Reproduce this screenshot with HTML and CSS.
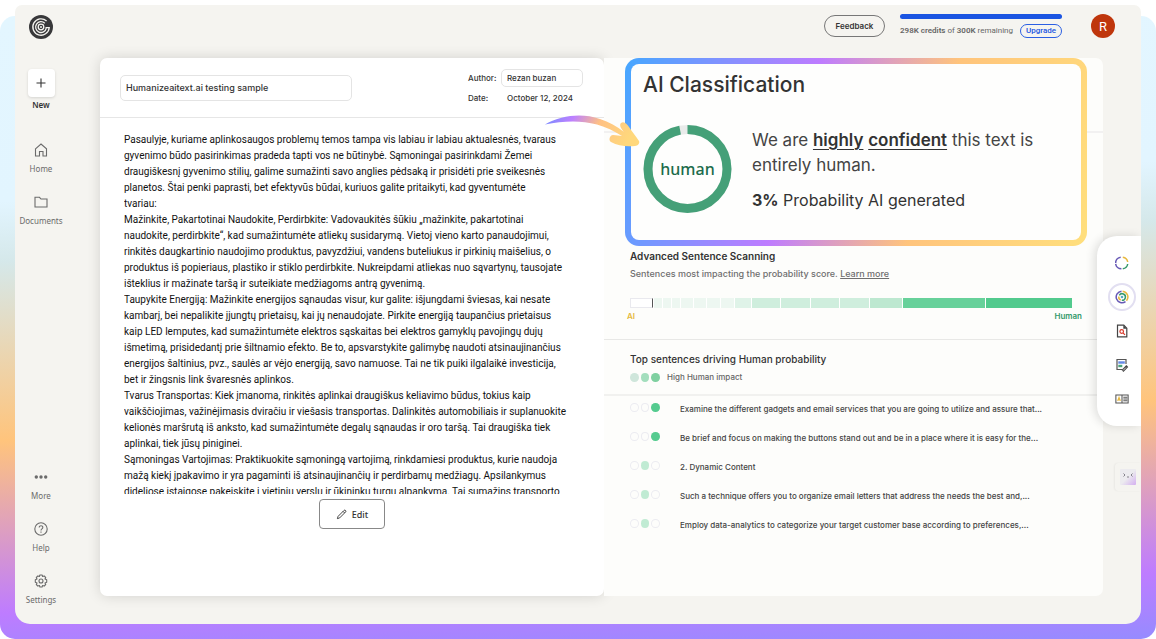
FILE: index.html
```html
<!DOCTYPE html>
<html lang="en">
<head>
<meta charset="utf-8">
<title>AI Classification</title>
<link rel="stylesheet" href="styles.css">
</head>
<body>
<div class="stage">
<div class="app">
  <nav class="sidebar" aria-label="Main">
    <svg class="logo" viewBox="0 0 24 24"><circle cx="12" cy="12" r="12" fill="#38383a"/><g fill="none" stroke="#f5f4f0" stroke-width="1.300"><path d="M17.600 6A8.200 8.200 0 1 0 20.200 12.700H16.500"/><path d="M15.800 8.200a5.400 5.400 0 1 0 1.500 5"/><circle cx="12" cy="12" r="2.800"/></g><circle cx="12" cy="12" r="1" fill="#f5f4f0"/></svg>
    <button class="new"><span class="new-box"><svg viewBox="0 0 16 16"><path d="M8 3.500v9M3.500 8h9"/></svg></span><b>New</b></button>
    <div class="nav-group">
      <a class="nav-item" href="#"><svg viewBox="0 0 16 16"><path d="M2.500 6.800 8 2l5.500 4.800V14H10V9.500H6.500V14h-4z"/></svg>Home</a>
      <a class="nav-item" href="#"><svg viewBox="0 0 16 16"><path d="M2 3.300h4.500L8 5h6v8H2z"/></svg>Documents</a>
    </div>
    <div class="nav-group nav-bottom">
      <a class="nav-item" href="#"><svg viewBox="0 0 16 16"><g fill="#6b6b6b" stroke="none"><circle cx="3.300" cy="8" r="1.700"/><circle cx="8" cy="8" r="1.700"/><circle cx="12.700" cy="8" r="1.700"/></g></svg>More</a>
      <a class="nav-item" href="#"><svg viewBox="0 0 16 16"><circle cx="8" cy="8" r="6.200"/><path d="M6.200 6.500C6.200 4 10 4.200 9.800 6.500 9.700 7.900 8 7.800 8 9.400M8 10.500v1.200"/></svg>Help</a>
      <a class="nav-item" href="#"><svg viewBox="0 0 16 16"><path stroke-linejoin="round" d="M6.900 2h2.200l.5 1.500 1.500-.6 1.600 1.600-.7 1.500 1.700.8v2.400l-1.700.8.7 1.500-1.600 1.600-1.500-.6-.5 1.500H6.900l-.5-1.500-1.500.6-1.600-1.600.7-1.500-1.700-.8V6.800L4 6l-.7-1.500 1.600-1.600 1.500.6z"/><circle cx="8" cy="8" r="2"/></svg>Settings</a>
    </div>
  </nav>

  <div class="main">
    <header class="topbar">
      <button class="feedback">Feedback</button>
      <div class="credits">
        <div class="credit-bar"></div>
        <div class="credit-row"><span><b>298K credits</b> of <b>300K</b> remaining</span><a class="upgrade" href="#">Upgrade</a></div>
      </div>
      <button class="avatar">R</button>
    </header>

    <div class="workspace">
      <article class="document">
        <div class="doc-head">
          <input class="title-input" aria-label="Document title" value="Humanizeaitext.ai testing sample">
          <div class="meta">
            <label for="author">Author:</label><input id="author" value="Rezan buzan">
            <span>Date:</span><span class="date">October 12, 2024</span>
          </div>
        </div>
        <div class="doc-body" lang="lt">Pasaulyje, kuriame aplinkosaugos problemų temos tampa vis labiau ir labiau aktualesnės, tvaraus<br>gyvenimo būdo pasirinkimas pradeda tapti vos ne būtinybė. Sąmoningai pasirinkdami Žemei<br>draugiškesnį gyvenimo stilių, galime sumažinti savo anglies pėdsaką ir prisidėti prie sveikesnės<br>planetos. Štai penki paprasti, bet efektyvūs būdai, kuriuos galite pritaikyti, kad gyventumėte<br>tvariau:<br>Mažinkite, Pakartotinai Naudokite, Perdirbkite: Vadovaukitės šūkiu „mažinkite, pakartotinai<br>naudokite, perdirbkite“, kad sumažintumėte atliekų susidarymą. Vietoj vieno karto panaudojimui,<br>rinkitės daugkartinio naudojimo produktus, pavyzdžiui, vandens buteliukus ir pirkinių maišelius, o<br>produktus iš popieriaus, plastiko ir stiklo perdirbkite. Nukreipdami atliekas nuo sąvartynų, tausojate<br>išteklius ir mažinate taršą ir suteikiate medžiagoms antrą gyvenimą.<br>Taupykite Energiją: Mažinkite energijos sąnaudas visur, kur galite: išjungdami šviesas, kai nesate<br>kambarį, bei nepalikite įjungtų prietaisų, kai jų nenaudojate. Pirkite energiją taupančius prietaisus<br>kaip LED lemputes, kad sumažintumėte elektros sąskaitas bei elektros gamyklų pavojingų dujų<br>išmetimą, prisidedantį prie šiltnamio efekto. Be to, apsvarstykite galimybę naudoti atsinaujinančius<br>energijos šaltinius, pvz., saulės ar vėjo energiją, savo namuose. Tai ne tik puiki ilgalaikė investicija,<br>bet ir žingsnis link švaresnės aplinkos.<br>Tvarus Transportas: Kiek įmanoma, rinkitės aplinkai draugiškus keliavimo būdus, tokius kaip<br>vaikščiojimas, važinėjimasis dviračiu ir viešasis transportas. Dalinkitės automobiliais ir suplanuokite<br>kelionės maršrutą iš anksto, kad sumažintumėte degalų sąnaudas ir oro taršą. Tai draugiška tiek<br>aplinkai, tiek jūsų piniginei.<br>Sąmoningas Vartojimas: Praktikuokite sąmoningą vartojimą, rinkdamiesi produktus, kurie naudoja<br>mažą kiekį įpakavimo ir yra pagaminti iš atsinaujinančių ir perdirbamų medžiagų. Apsilankymus<br>dideliose įstaigose pakeiskite į vietinių verslų ir ūkininkų turgų alpankymą. Tai sumažins transporto</div>
        <div class="doc-foot"><button class="edit"><svg viewBox="0 0 12 12"><path d="M1.500 10.500 2.300 8 8.700 1.600a1.100 1.100 0 0 1 1.700 1.700L4 9.700zM7.700 2.600l1.700 1.700"/></svg>Edit</button></div>
      </article>

      <section class="results">
        <div class="highlight">
          <h1>AI Classification</h1>
          <div class="verdict">
            <div class="ring"><svg viewBox="0 0 88 88"><circle cx="44" cy="44" r="39.500" stroke="#e9ebea"/><circle cx="44" cy="44" r="39.500" stroke="#45a078" pathLength="100" stroke-dasharray="97 3" transform="rotate(-90 44 44)"/></svg><span>human</span></div>
            <div class="verdict-text">
              <p class="lead">We are <u>highly</u> <u>confident</u> this text is<br>entirely human.</p>
              <p class="prob"><b>3%</b> Probability AI generated</p>
            </div>
          </div>
        </div>

        <div class="scan">
          <h2>Advanced Sentence Scanning</h2>
          <p>Sentences most impacting the probability score. <a href="#">Learn more</a></p>
          <div class="scale">
            <i class="s0" style="flex-grow:21"></i><i class="s1" style="flex-grow:8"></i><i class="s1" style="flex-grow:8"></i><i class="s1" style="flex-grow:8"></i><i class="s1" style="flex-grow:12"></i><i class="s1" style="flex-grow:12"></i><i class="s1" style="flex-grow:13"></i><i class="s1" style="flex-grow:13"></i><i class="s2" style="flex-grow:16"></i><i class="s3" style="flex-grow:28"></i><i class="s3" style="flex-grow:29"></i><i class="s3" style="flex-grow:28"></i><i class="s3" style="flex-grow:29"></i><i class="s4" style="flex-grow:33"></i><i class="s5" style="flex-grow:82"></i><i class="s6" style="flex-grow:86"></i>
          </div>
          <div class="scale-labels"><span class="ai">AI</span><span class="human">Human</span></div>
        </div>

        <div class="top-sentences">
          <h2>Top sentences driving Human probability</h2>
          <div class="legend"><span class="dots"><i class="d1"></i><i class="d2"></i><i class="d3"></i></span>High Human impact</div>
        </div>

        <ul class="sentences">
          <li><span class="dots"><i></i><i></i><i class="strong"></i></span><span>Examine the different gadgets and email services that you are going to utilize and assure that...</span></li>
          <li><span class="dots"><i></i><i></i><i class="strong"></i></span><span>Be brief and focus on making the buttons stand out and be in a place where it is easy for the...</span></li>
          <li><span class="dots"><i></i><i class="mild"></i><i></i></span><span>2. Dynamic Content</span></li>
          <li><span class="dots"><i></i><i class="mild"></i><i></i></span><span>Such a technique offers you to organize email letters that address the needs the best and,...</span></li>
          <li><span class="dots"><i></i><i class="mild"></i><i></i></span><span>Employ data-analytics to categorize your target customer base according to preferences,...</span></li>
        </ul>
        <svg class="arrow" viewBox="0 0 98 36"><defs><linearGradient id="swoosh" x1="0" y1="0" x2="1" y2=".2"><stop offset="0" stop-color="#6f8dff"/><stop offset=".3" stop-color="#bd80ff"/><stop offset=".6" stop-color="#ffc183"/><stop offset="1" stop-color="#ffd87c"/></linearGradient></defs><path fill="url(#swoosh)" d="M1 12.500C18 3 38 1 56 7c9 3 17 7.500 24 13C77 17 75 13 77 11c3-2 6 1 8 4 3 5 7 9 10 14 1 2-1 5-4 5-8 1-17 0-24-4-3-2-1-7 2-7 4 0 6 1 9 1-8-5-16-9-25-11.500C36 8 19 9 1 12.500z"/></svg>
      </section>
    </div>
  </div>

  <aside class="rail" aria-label="Tools">
    <button aria-label="Overview"><svg viewBox="0 0 14 14"><g fill="none" stroke-width="1.500"><path stroke="#6658b5" d="M6.400 12.800A5.800 5.800 0 0 1 6.400 1.200" stroke-dasharray="8 1"/><path stroke="#e8b83e" d="M7.800 1.200A5.800 5.800 0 0 1 12.700 6"/><path stroke="#36996b" d="M12.700 8A5.800 5.800 0 0 1 7.800 12.800"/></g></svg></button>
    <button class="active" aria-label="Classification"><svg viewBox="0 0 14 14"><g fill="none" stroke-width="1.500"><path stroke="#6658b5" d="M6.500 1.200A5.800 5.800 0 1 0 10.500 11.600"/><path stroke="#e8b83e" d="M7.600 1.200A5.800 5.800 0 0 1 11.500 10.700"/><path stroke="#36996b" d="M4.300 5.300a3.300 3.300 0 1 1 2.500 5"/><path stroke="#e8b83e" d="M3.800 6.500a3.200 3.200 0 0 0 2 3.500"/></g><circle cx="7" cy="7" r="1.300" fill="#58aac0"/></svg></button>
    <button aria-label="Plagiarism"><svg viewBox="0 0 14 14"><path fill="#fff" stroke="#444" stroke-width="1.200" d="M2.500 1.200h6.300l3 3v8.600H2.500z"/><path fill="#444" d="M8.300 1v3.700H12z"/><circle cx="6.700" cy="7.500" r="1.800" fill="none" stroke="#d8392b" stroke-width="1.200"/><path stroke="#d8392b" stroke-width="1.200" d="m8 8.800 2 2"/></svg></button>
    <button aria-label="Writing"><svg viewBox="0 0 14 14"><path fill="none" stroke="#555" stroke-width="1.200" d="M11 6V1.500H2v10h5"/><path stroke="#6488e6" stroke-width="2.400" d="M3.300 4.500h6.500"/><path stroke="#4ba47c" stroke-width="2.400" d="M3.300 8h4"/><path stroke="#444" stroke-width="2.600" d="m7.500 13 4.800-5"/><path stroke="#fff" stroke-width=".8" d="m8 12.500 3-3"/></svg></button>
    <button aria-label="Readability"><svg viewBox="0 0 16 14"><path fill="#fff" stroke="#555" stroke-width="1.200" d="M1 2.500h14v9H1zM8 2.500v9M9.500 5H14M9.500 7H14M9.500 9H14"/><path fill="none" stroke="#e8b83e" stroke-width="1.200" d="M3 9.200 4.600 5l1.600 4.200M3.500 8h2.200"/></svg></button>
  </aside>
  <button class="bot" aria-label="Assistant"><svg viewBox="0 0 16 16"><defs><linearGradient id="bot" x1="0" y1="0" x2="1" y2="1"><stop offset=".5" stop-color="#ecebef"/><stop offset="1" stop-color="#d3aef0"/></linearGradient></defs><rect width="16" height="16" rx="1" fill="url(#bot)"/><path fill="none" stroke="#85828c" d="m3.500 4.500 1.500 1.500-1.500 1.500M12.500 4.500 11 6l1.500 1.500M7 8h2"/></svg></button>
</div>
</div>
</body>
</html>
```

FILE: styles.css
```css
* { box-sizing: border-box; }
body, h1, h2, p, ul { margin: 0; padding: 0; }
body { font-family: Inter, "Liberation Sans", sans-serif; color: #333; background: #fff; }
button, input { font: inherit; color: inherit; margin: 0; }
button { padding: 0; border: 0; background: none; cursor: pointer; }
a { color: inherit; text-decoration: none; }

.stage { position: relative; height: 100vh; padding: 5px 15px 15px; }
.stage::before {
  content: ""; position: absolute; inset: 16px 0 0; border-radius: 15px;
  background: linear-gradient(178deg, #e3f6ff 0%, #e2f5ff 28%, #d5e8ea 37%, #ffc47c 64%, #be7cff 90%, #968bff 100%);
}
.app { position: relative; display: flex; height: 100%; background: #f5f4f0; border-radius: 7px 7px 15px 15px; }

.sidebar {
  flex: none; width: 52px; padding: 10px 0 18px; display: flex; flex-direction: column; align-items: center;
  font: 8px/12px "Noto Sans", sans-serif; color: #6b6b6b;
}
.logo { width: 24px; height: 24px; margin-bottom: 30px; }
.new { display: flex; flex-direction: column; align-items: center; gap: 2px; margin-bottom: 31px; color: #333; }
.new b { font-weight: 600; }
.new-box { width: 27px; height: 28px; display: grid; place-items: center; background: #fff; border-radius: 4px; box-shadow: 0 1px 3px #0002; }
.sidebar svg:not(.logo) { width: 16px; height: 16px; fill: none; stroke: #6b6b6b; stroke-width: 1.1; }
.sidebar .new svg { stroke: #333; }
.nav-group { display: flex; flex-direction: column; gap: 19px; }
.nav-item { display: flex; flex-direction: column; align-items: center; gap: 5px; }
.nav-bottom { margin-top: auto; }

.main { flex: 1; min-width: 0; display: flex; flex-direction: column; padding: 0 0 28px 33px; }
.topbar { flex: none; height: 53px; padding: 9px 26px 0 0; display: flex; justify-content: flex-end; align-items: flex-start; }
.feedback { width: 61px; height: 22px; margin: 1px 15px 0 0; border: 1px solid #777; border-radius: 11px; font-size: 8px; font-weight: 600; }
.credits { width: 162px; margin-right: 29px; }
.credit-bar { height: 5px; border-radius: 3px; background: #1b55e2; }
.credit-row { display: flex; justify-content: space-between; align-items: center; margin-top: 5px; font: 8px/12px Roboto, sans-serif; color: #666; white-space: nowrap; }
.credit-row b { font-weight: 600; }
.upgrade { padding: 0 5px; border: 1px solid #2b5fe3; border-radius: 7px; color: #1b55e2; font-weight: 500; }
.avatar { width: 24px; height: 24px; border-radius: 50%; background: #bf360c; color: #fff; font: 13px Roboto, sans-serif; }

.workspace { flex: 1; min-height: 0; display: flex; margin-right: 38px; }
.document { flex: 504 1 0; min-width: 0; position: relative; display: flex; flex-direction: column; background: #fff; border-radius: 7px; box-shadow: 0 0 14px #00000024; }
.doc-head { flex: none; height: 60px; padding: 0 21px 0 20px; display: flex; justify-content: space-between; align-items: center; border-bottom: 1px solid #e6e6e6; }
.doc-head input { border: 1px solid #e4e4e4; border-radius: 5px; background: #fff; padding: 0 5px; min-width: 0; }
.title-input { width: 232px; height: 26px; font-size: 9px; font-weight: 500; }
.meta { display: grid; grid-template-columns: 33px 82px; row-gap: 2px; align-items: center; font-size: 8px; font-weight: 500; }
.meta input { height: 18px; }
.meta > span { line-height: 18px; white-space: nowrap; }
.meta .date { padding-left: 6px; }
.doc-body { flex: 1; min-height: 0; margin: 14px 24px 0; overflow: hidden; font: 10px/16px Roboto, sans-serif; color: #111; white-space: nowrap; }
.doc-foot { flex: none; display: flex; justify-content: center; padding: 5px 0 67px; }
.edit { width: 66px; height: 30px; display: flex; align-items: center; justify-content: center; gap: 5px; border: 1px solid #888; border-radius: 4px; font: 500 9px "Noto Sans", sans-serif; background: #fff; }
.edit svg { width: 11px; height: 11px; fill: none; stroke: #333; }

.results {
  flex: 499 1 0; min-width: 0; position: relative; border-radius: 0 7px 7px 0; font-weight: 500;
  background: linear-gradient(#f2f1f1, #f2f1f1) 0 73px / 100% 2px no-repeat, #fdfdfb;
}
.highlight {
  height: 188px; margin: 0 16px 0 21px; padding: 7px 12px 0; border: 6px solid transparent; border-radius: 14px;
  background: linear-gradient(#fefefd, #fefefd) padding-box, linear-gradient(106deg, #46a7ff, #be7cff 38%, #ffc47c 65%, #ffdf7c) border-box;
}
h1 { font-size: 21px; line-height: 28px; font-weight: 500; }
.verdict { display: flex; align-items: center; gap: 20px; margin-top: 26px; }
.ring { flex: none; position: relative; width: 89px; height: 88px; display: grid; place-items: center; font: 500 16px/24px "Noto Sans", sans-serif; color: #206b4b; }
.ring svg { position: absolute; inset: 0; width: 100%; height: 100%; fill: none; stroke-width: 9; }
.verdict-text { white-space: nowrap; }
.lead { font-size: 17px; line-height: 25px; font-weight: 400; color: #444; }
.lead u { font-weight: 600; color: #333; text-underline-offset: 3px; }
.prob { margin-top: 12px; font-size: 16px; line-height: 20px; font-weight: 400; }
.prob b { font-weight: 700; }
.scan { padding: 2px 31px 17px 26px; border-bottom: 1px solid #e8e8e6; }
h2 { font-size: 10px; line-height: 16px; font-weight: 500; }
.scan h2 { font-weight: 600; }
.scan p { margin-top: 2px; font-size: 9px; line-height: 16px; color: #6f6f6f; }
.scan p a { text-decoration: underline; }
.scale { display: flex; gap: 1px; height: 10px; margin-top: 16px; background: #fff; }
.scale i { flex-basis: 0; }
.s0 { border: 1px solid #e9e9ee; border-right: 1px solid #555; }
.s1 { background: #edf7f1; }
.s2 { background: #dff3e8; }
.s3 { background: #cfeedd; }
.s4 { background: #bde8d0; }
.s5 { background: #67d19a; }
.s6 { background: #52ca8d; }
.scale-labels { display: flex; justify-content: space-between; margin: 2px -10px 0 -3px; font-size: 8px; line-height: 12px; font-weight: 600; }
.ai { color: #e5b93c; }
.human { color: #339a6b; }
.top-sentences { padding: 11px 26px 9px; border-bottom: 2px solid #f1f1ef; }
.legend { display: flex; gap: 7px; margin-top: 2px; font-size: 8px; line-height: 16px; color: #666; align-items: center; }
.dots { display: flex; flex: none; gap: 2px; width: 30px; }
.dots i { width: 9px; height: 9px; border: 1px solid #ececf1; border-radius: 50%; }
.dots .d1 { background: #cfe6db; border: 0; }
.dots .d2 { background: #a3debd; border: 0; }
.dots .d3 { background: #7fd0a0; border: 0; }
.dots .strong { background: #55cb8f; border: 0; }
.dots .mild { background: #c0ebd3; border: 0; }
.sentences { list-style: none; padding-left: 26px; font-size: 8px; line-height: 12px; color: #444; }
.sentences li { display: flex; gap: 20px; height: 29px; padding-top: 7px; white-space: nowrap; }
.arrow { position: absolute; left: -60px; top: 54px; width: 98px; height: 36px; }

.rail { position: absolute; right: 0; top: 231px; width: 44px; padding: 10px 0; display: flex; flex-direction: column; align-items: center; background: #fff; border-radius: 20px 0 0 20px; box-shadow: -3px 0 10px #0000001f; clip-path: inset(-15px 0 -15px -15px); }
.rail button { width: 28px; height: 28px; margin: 3px 0 3px 6px; display: grid; place-items: center; border-radius: 50%; }
.rail .active { border: 2px solid #e2dff1; }
.rail svg { width: 14px; height: 14px; }
.bot { position: absolute; right: 0; top: 458px; width: 26px; height: 28px; display: grid; place-items: center; border-radius: 4px 0 0 4px; box-shadow: -1px 0 2px #0000000d; }
.bot svg { width: 16px; height: 16px; }
```
